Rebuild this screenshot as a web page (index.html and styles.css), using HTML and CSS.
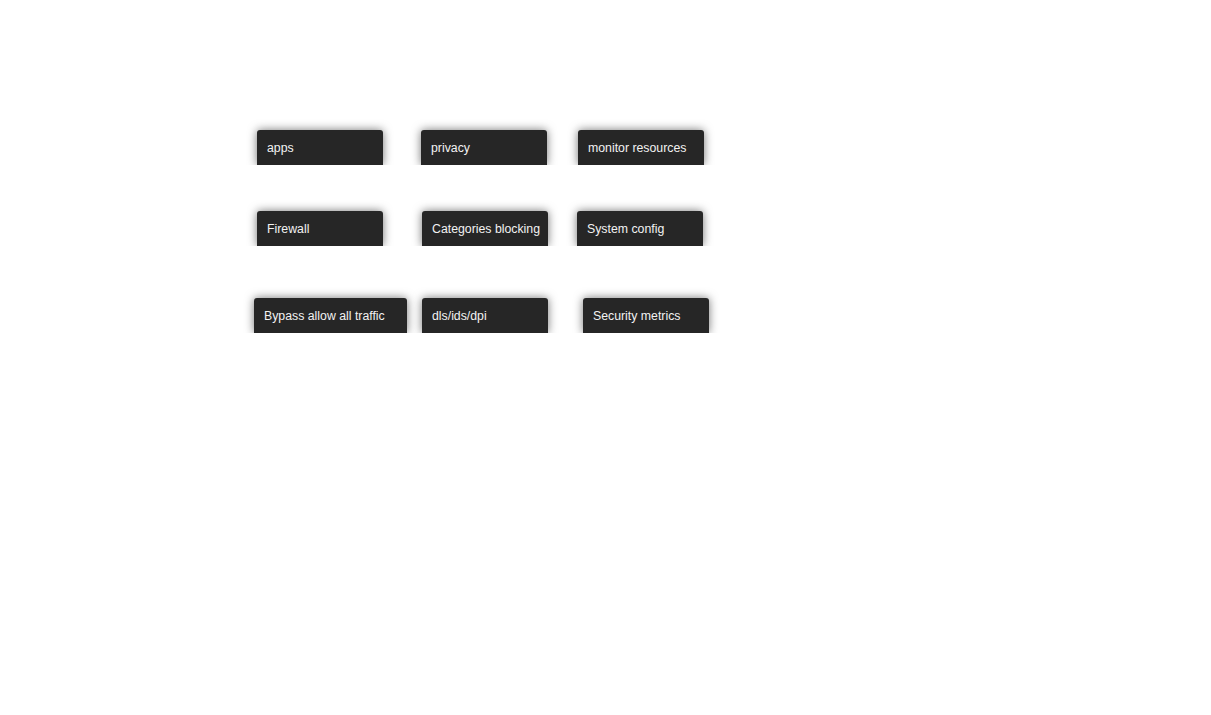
FILE: index.html
```html
<!DOCTYPE html>
<html>
<head>
<meta charset="utf-8">
<link rel="stylesheet" href="styles.css">
</head>
<body>
<div class="page">
  <div class="row row1">
    <div class="tab t-a">apps</div>
    <div class="tab t-b">privacy</div>
    <div class="tab t-c">monitor resources</div>
  </div>
  <div class="row row2">
    <div class="tab t-a">Firewall</div>
    <div class="tab t-b2">Categories blocking</div>
    <div class="tab t-c2">System config</div>
  </div>
  <div class="row row3">
    <div class="tab wide t-a3">Bypass allow all traffic</div>
    <div class="tab t-b3">dls/ids/dpi</div>
    <div class="tab t-c3">Security metrics</div>
  </div>
</div>
</body>
</html>
```
FILE: styles.css
```css
html, body {
  margin: 0;
  padding: 0;
  background: #ffffff;
}
.page {
  padding-top: 130px;
  font-family: "Liberation Sans", Arial, sans-serif;
}
.row {
  display: flex;
  align-items: flex-start;
}
.row2 { margin-top: 46px; }
.row3 { margin-top: 52px; }
.tab {
  box-sizing: border-box;
  width: 126px;
  height: 35px;
  line-height: 34px;
  padding-top: 1px;
  padding-left: 10px;
  background: #262626;
  color: #f2f2f2;
  font-size: 12.3px;
  border-radius: 3px 3px 0 0;
  box-shadow: 0 0 10px rgba(0, 0, 0, 0.55);
  clip-path: inset(-14px -14px 0 -14px);
  white-space: nowrap;
}
.wide { width: 153px; }
.t-a { margin-left: 257px; }
.t-b { margin-left: 38px; }
.t-c { margin-left: 31px; }
.t-b2 { margin-left: 39px; }
.t-c2 { margin-left: 29px; }
.t-a3 { margin-left: 254px; }
.t-b3 { margin-left: 15px; }
.t-c3 { margin-left: 35px; }
```
